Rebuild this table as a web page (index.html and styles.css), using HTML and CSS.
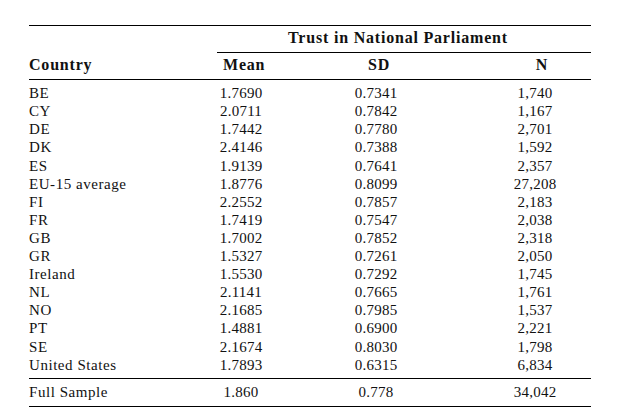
FILE: index.html
```html
<!DOCTYPE html>
<html lang="en">
<head>
<meta charset="utf-8">
<title>Trust in National Parliament</title>
<link rel="stylesheet" href="styles.css">
</head>
<body>
<div class="wrap">
<table class="tbl">
  <colgroup>
    <col class="c-country">
    <col class="c-mean">
    <col class="c-sd">
    <col class="c-n">
  </colgroup>
  <thead>
    <tr class="group">
      <th class="blank"></th>
      <th class="grouphead" colspan="3">Trust in National Parliament</th>
    </tr>
    <tr class="head">
      <th class="lhead">Country</th>
      <th class="nhead">Mean</th>
      <th class="nhead">SD</th>
      <th class="nhead">N</th>
    </tr>
  </thead>
  <tbody>
    <tr class="first"><td class="name">BE</td><td class="num">1.7690</td><td class="num">0.7341</td><td class="num n">1,740</td></tr>
    <tr><td class="name">CY</td><td class="num">2.0711</td><td class="num">0.7842</td><td class="num n">1,167</td></tr>
    <tr><td class="name">DE</td><td class="num">1.7442</td><td class="num">0.7780</td><td class="num n">2,701</td></tr>
    <tr><td class="name">DK</td><td class="num">2.4146</td><td class="num">0.7388</td><td class="num n">1,592</td></tr>
    <tr><td class="name">ES</td><td class="num">1.9139</td><td class="num">0.7641</td><td class="num n">2,357</td></tr>
    <tr><td class="name">EU-15 average</td><td class="num">1.8776</td><td class="num">0.8099</td><td class="num n">27,208</td></tr>
    <tr><td class="name">FI</td><td class="num">2.2552</td><td class="num">0.7857</td><td class="num n">2,183</td></tr>
    <tr><td class="name">FR</td><td class="num">1.7419</td><td class="num">0.7547</td><td class="num n">2,038</td></tr>
    <tr><td class="name">GB</td><td class="num">1.7002</td><td class="num">0.7852</td><td class="num n">2,318</td></tr>
    <tr><td class="name">GR</td><td class="num">1.5327</td><td class="num">0.7261</td><td class="num n">2,050</td></tr>
    <tr><td class="name">Ireland</td><td class="num">1.5530</td><td class="num">0.7292</td><td class="num n">1,745</td></tr>
    <tr><td class="name">NL</td><td class="num">2.1141</td><td class="num">0.7665</td><td class="num n">1,761</td></tr>
    <tr><td class="name">NO</td><td class="num">2.1685</td><td class="num">0.7985</td><td class="num n">1,537</td></tr>
    <tr><td class="name">PT</td><td class="num">1.4881</td><td class="num">0.6900</td><td class="num n">2,221</td></tr>
    <tr><td class="name">SE</td><td class="num">2.1674</td><td class="num">0.8030</td><td class="num n">1,798</td></tr>
    <tr class="last"><td class="name">United States</td><td class="num">1.7893</td><td class="num">0.6315</td><td class="num n">6,834</td></tr>
  </tbody>
  <tfoot>
    <tr class="total"><td class="name">Full Sample</td><td class="num">1.860</td><td class="num">0.778</td><td class="num n">34,042</td></tr>
  </tfoot>
</table>
</div>
</body>
</html>
```

FILE: styles.css
```css
html, body {
  margin: 0;
  padding: 0;
  background: #ffffff;
}

body {
  font-family: "Liberation Serif", "Times New Roman", serif;
  font-size: 15px;
  color: #111111;
}

.wrap {
  padding: 25px 30px 0 29px;
}

.tbl {
  width: 562px;
  border-collapse: collapse;
  table-layout: fixed;
  border-top: 1px solid #000;
  border-bottom: 1px solid #000;
}

.c-country { width: 188px; }
.c-mean { width: 48px; }
.c-sd { width: 222px; }
.c-n { width: 104px; }

.tbl th,
.tbl td {
  padding: 0;
  line-height: 18.1px;
  white-space: nowrap;
}

.tbl th {
  font-size: 16px;
  font-weight: bold;
  letter-spacing: 0.8px;
}

.group th {
  padding-top: 3px;
  padding-bottom: 5px;
}

.grouphead {
  text-align: center;
  padding-right: 12px !important;
  border-bottom: 1px solid #000;
}

.head th {
  padding-top: 3px;
  padding-bottom: 5px;
  border-bottom: 1px solid #000;
}

.lhead {
  text-align: left;
}

.nhead {
  text-align: center;
  padding-left: 6px !important;
}

.name {
  text-align: left;
  letter-spacing: 0.55px;
}

.num {
  text-align: center;
  letter-spacing: 0.25px;
}

.num.n {
  padding-right: 8px;
}

.first td {
  padding-top: 4px;
}

.last td {
  padding-bottom: 4px;
}

.total td {
  padding-top: 4.5px;
  padding-bottom: 5px;
  border-top: 1px solid #000;
}
```
